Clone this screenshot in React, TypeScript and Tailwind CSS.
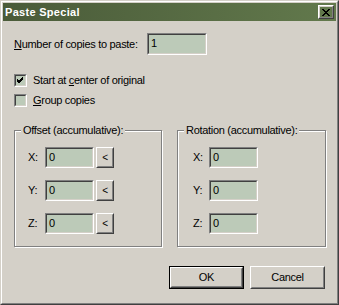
import type { ReactNode } from "react";

const font = { fontFamily: '"Liberation Sans", Arial, sans-serif' };

function Sunken({ value, className }: { value: string; className: string }) {
  return (
    <div
      className={`border border-t-[#808080] border-l-[#808080] border-b-white border-r-white ${className}`}
    >
      <div className="h-full border border-t-[#404040] border-l-[#404040] border-b-[#d4d0c8] border-r-[#d4d0c8] bg-[#bccab8] pl-[2px] text-[11px] leading-[17px] text-black">
        {value}
      </div>
    </div>
  );
}

function RaisedButton({ children, className, isDefault }: { children: ReactNode; className: string; isDefault?: boolean }) {
  const inner = (
    <div className="h-full border border-t-white border-l-white border-b-[#404040] border-r-[#404040]">
      <div className="h-full flex items-center justify-center border border-t-[#d4d0c8] border-l-[#d4d0c8] border-b-[#808080] border-r-[#808080] text-[11px] text-black">
        {children}
      </div>
    </div>
  );
  if (isDefault) {
    return <div className={`border border-black ${className}`}>{inner}</div>;
  }
  return <div className={className}>{inner}</div>;
}

function CheckBox({ checked }: { checked?: boolean }) {
  return (
    <div className="w-[13px] h-[13px] border border-t-[#808080] border-l-[#808080] border-b-white border-r-white shrink-0">
      <div className="w-full h-full border border-t-[#404040] border-l-[#404040] border-b-[#d4d0c8] border-r-[#d4d0c8] bg-[#bccab8]">
        {checked && (
          <svg width="9" height="9" viewBox="0 0 9 9" className="block">
            <path d="M1 3 L3 5 L7 1 M1 4 L3 6 L7 2 M1 5 L3 7 L7 3" stroke="black" strokeWidth="1" fill="none" shapeRendering="crispEdges" />
          </svg>
        )}
      </div>
    </div>
  );
}

function GroupBox({ title, className, children }: { title: string; className: string; children: ReactNode }) {
  return (
    <div
      className={`relative border border-[#808080] shadow-[inset_1px_1px_0_#fff,1px_1px_0_#fff] ${className}`}
    >
      <span className="absolute -top-[7px] left-[6px] bg-[#d4d0c8] px-[2px] text-[11px] leading-[13px] text-black tracking-[-0.3px]">
        {title}
      </span>
      {children}
    </div>
  );
}

function AxisRow({ axis, withButton, labelW }: { axis: string; withButton?: boolean; labelW: string }) {
  return (
    <div className="flex items-center h-[21px]">
      <span className={`${labelW} text-[11px] text-black`}>{axis}:</span>
      <Sunken value="0" className="w-[49px] h-[21px]" />
      {withButton && (
        <RaisedButton className="ml-[2px] w-[18px] h-[21px]">
          <span className="text-[10px] leading-none">&lt;</span>
        </RaisedButton>
      )}
    </div>
  );
}

export default function App() {
  return (
    <div
      className="w-[339px] h-[305px] border border-t-[#d4d0c8] border-l-[#d4d0c8] border-b-[#404040] border-r-[#404040] bg-[#d4d0c8] select-none"
      style={font}
    >
      <div className="h-full border border-t-white border-l-white border-b-[#808080] border-r-[#808080] p-px flex flex-col">
        {/* title bar */}
        <div className="h-[18px] flex items-center justify-between bg-gradient-to-r from-[#4a5b39] to-[#62794c] pl-[2px] pr-[2px]">
          <span className="text-white font-bold text-[11px] tracking-[0.3px]">Paste Special</span>
          <RaisedButton className="w-[16px] h-[14px]">
            <svg width="8" height="7" viewBox="0 0 8 7" className="block">
              <path d="M0 0h2v1h-2zM6 0h2v1h-2zM1 1h2v1h-2zM5 1h2v1h-2zM2 2h4v1h-4zM3 3h2v1h-2zM2 4h4v1h-4zM1 5h2v1h-2zM5 5h2v1h-2zM0 6h2v1h-2zM6 6h2v1h-2z" fill="black" />
            </svg>
          </RaisedButton>
        </div>

        {/* body */}
        <div className="flex flex-col pl-[11px] pt-[12px] text-[11px] text-black tracking-[-0.3px]">
          <div className="flex items-center h-[22px]">
            <span className="w-[133px]">
              <u>N</u>umber of copies to paste:
            </span>
            <Sunken value="1" className="w-[60px] h-[22px]" />
          </div>

          <div className="flex items-center gap-[6px] mt-[19px] h-[13px]">
            <CheckBox checked />
            <span>
              Start at <u>c</u>enter of original
            </span>
          </div>
          <div className="flex items-center gap-[6px] mt-[7px] h-[13px]">
            <CheckBox />
            <span>
              <u>G</u>roup copies
            </span>
          </div>

          <div className="flex gap-[15px] mt-[23px]">
            <GroupBox title="Offset (accumulative):" className="w-[148px] h-[117px]">
              <div className="flex flex-col gap-[12px] pl-[13px] pt-[16px]">
                <AxisRow axis="X" withButton labelW="w-[17px]" />
                <AxisRow axis="Y" withButton labelW="w-[17px]" />
                <AxisRow axis="Z" withButton labelW="w-[17px]" />
              </div>
            </GroupBox>
            <GroupBox title="Rotation (accumulative):" className="w-[149px] h-[117px]">
              <div className="flex flex-col gap-[12px] pl-[15px] pt-[16px]">
                <AxisRow axis="X" labelW="w-[16px]" />
                <AxisRow axis="Y" labelW="w-[16px]" />
                <AxisRow axis="Z" labelW="w-[16px]" />
              </div>
            </GroupBox>
          </div>

          <div className="flex gap-[6px] mt-[19px] ml-[155px]">
            <RaisedButton isDefault className="w-[75px] h-[23px]">
              OK
            </RaisedButton>
            <RaisedButton className="w-[75px] h-[23px]">Cancel</RaisedButton>
          </div>
        </div>
      </div>
    </div>
  );
}
